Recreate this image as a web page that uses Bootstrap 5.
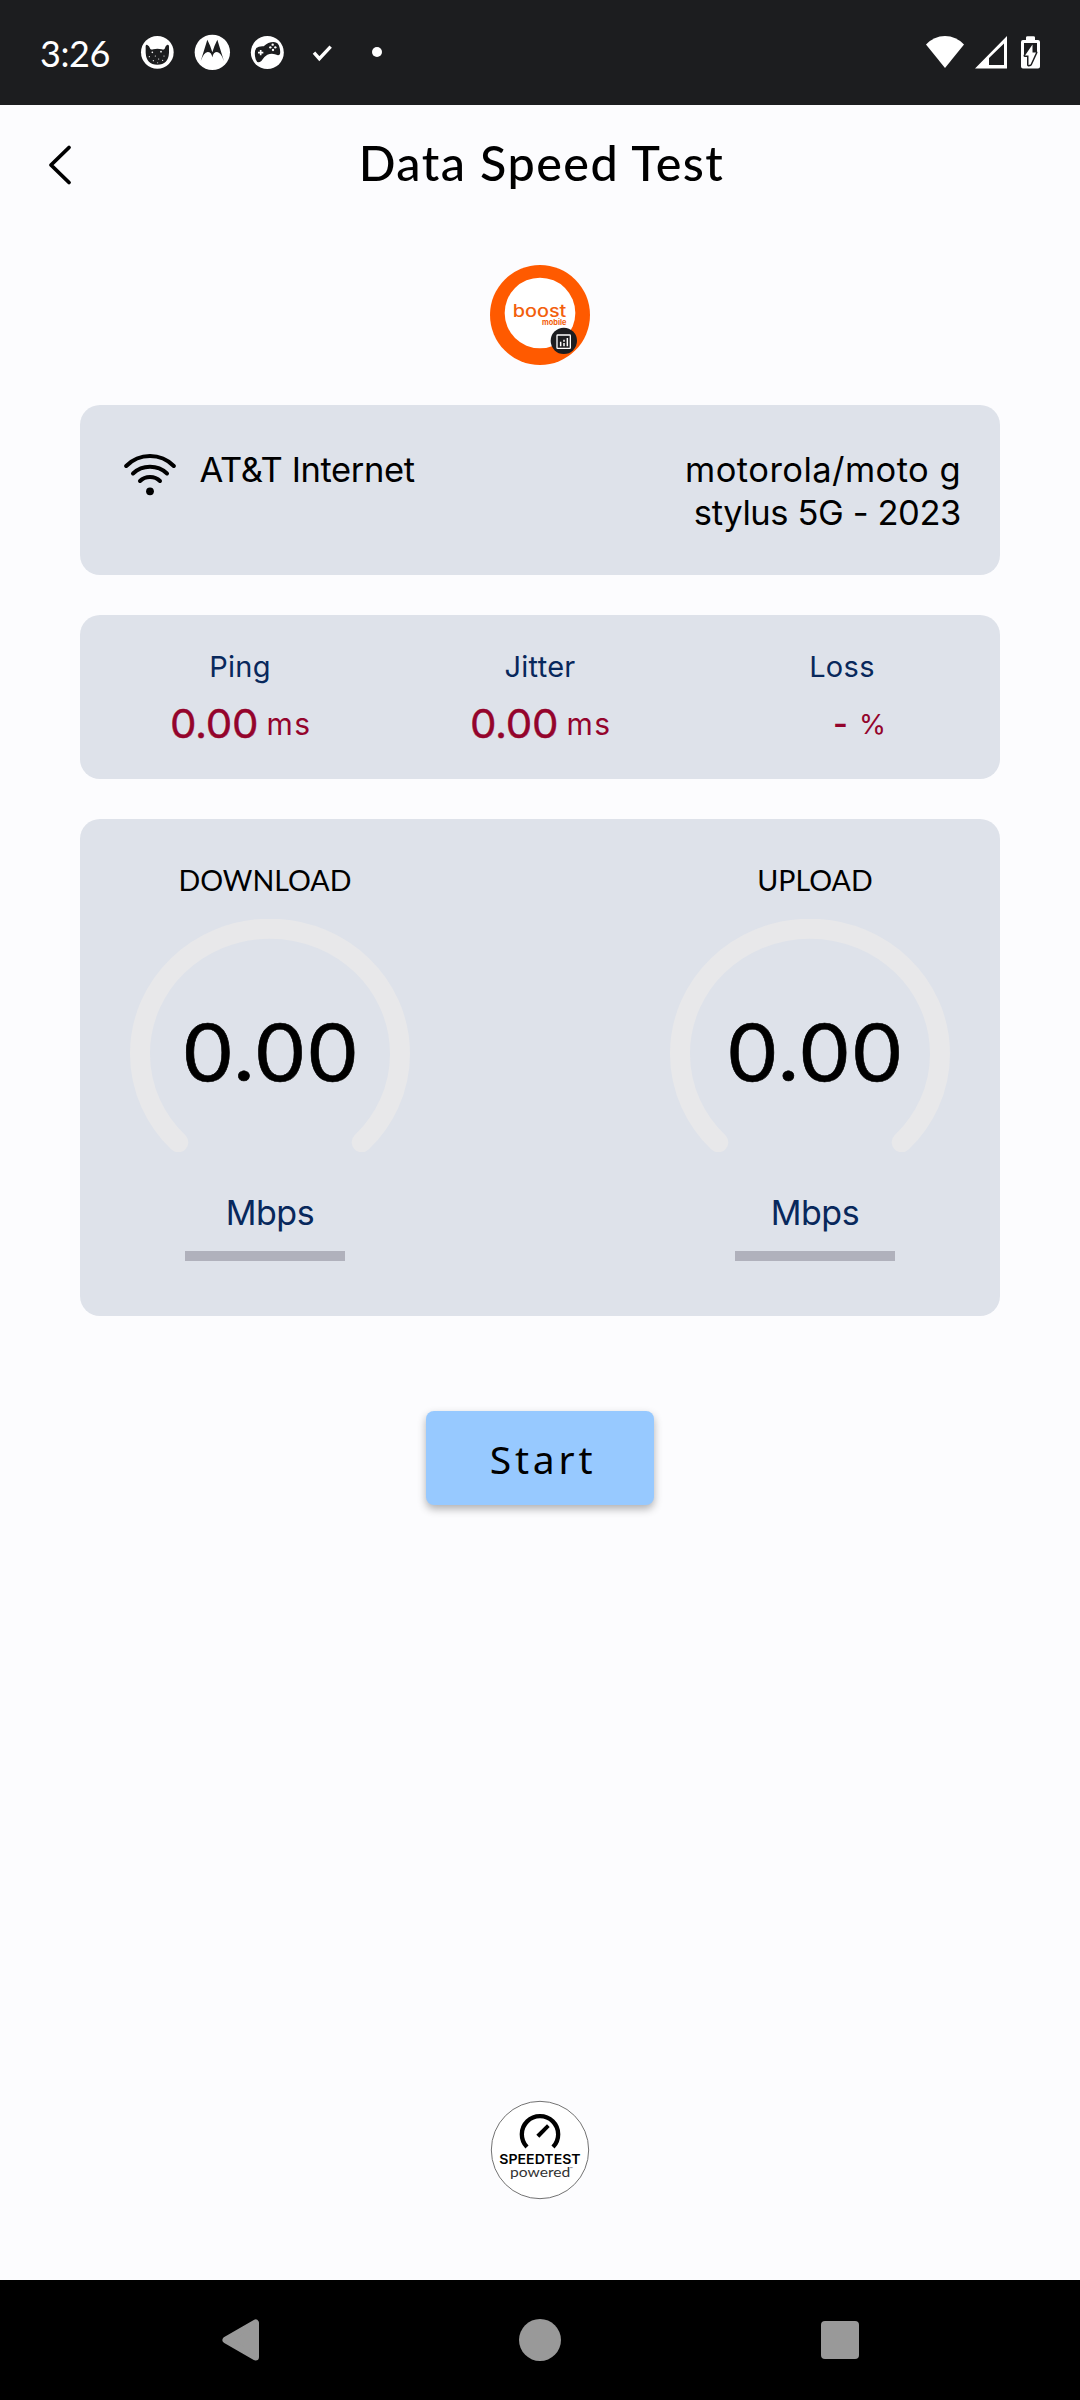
<!DOCTYPE html>
<html lang="en">
<head>
<meta charset="utf-8">
<meta name="viewport" content="width=device-width, initial-scale=1">
<title>Data Speed Test</title>
<link href="https://cdn.jsdelivr.net/npm/bootstrap@5.3.0/dist/css/bootstrap.min.css" rel="stylesheet">
<style>
body{background:#fcfcfe;color:#000;font-family:Inter,"Liberation Sans",sans-serif}
.screen{width:1080px;height:2400px;overflow:hidden}
svg{display:block;flex:none}
.status-bar{height:105px;background:#1c1d1f;padding:0 40px}
.clock{font:400 36px/36px Lato,sans-serif;width:90px;letter-spacing:-.4px;padding-top:1px}
.app-bar{height:113px}
.app-title{font:500 48.5px/60px Lato,sans-serif;letter-spacing:1.45px;margin-left:3px}
.back-btn{left:0;top:0;width:120px;height:120px}
.brand{margin-top:47px}
.panel{background:#dee2ea;border-radius:20px;margin:40px 80px 0}
.net-panel{height:170px;padding:43px 39px 0 44px;font-size:34.5px;line-height:43px}
.net-name{margin-left:23.5px;letter-spacing:-.4px}
.net-device{letter-spacing:.45px}
.net-device span{letter-spacing:-.4px}
.wifi-icon{margin-top:5px}
.stat-panel{height:164px;padding:32px 10px 0}
.navy{color:#08285c}
.crimson{color:#94042c}
.stat-name{font-size:29px;line-height:40px;letter-spacing:.3px}
.stat-val{margin-top:12px;line-height:50px;gap:11px;padding-left:3px}
.stat-num{font-size:40px;letter-spacing:-.3px;transform:scaleX(1.05);-webkit-text-stroke:.4px}
.stat-unit{font-size:30px;letter-spacing:1.4px}
.loss-val{padding-left:39px}
.loss-dash{font-size:32px;font-weight:600}
.loss-unit{font-size:27.5px}
.gauge-panel{height:497px;padding:43px 50px 0}
.gauge{width:280px}
.gauge-name{font:400 28.6px/36px Lato,sans-serif;margin-bottom:21px}
.gauge-num{top:94px;left:0;right:0;font-size:78px;line-height:80px;letter-spacing:-.5px;transform:scaleX(1.08);-webkit-text-stroke:.6px}
.gauge-unit{font-size:34px;line-height:42px;letter-spacing:-.4px;margin-top:40px}
.gauge-line{width:160px;height:10px;background:#b0b1bc;margin-top:17px}
.shift-l{margin-left:-10px}
.shift-r{margin-left:10px}
.gauge-up .gauge-num{left:9px}
.start-btn{width:228px;height:94px;margin-top:95px;padding:2px 0 0 6px;background:#97c9ff;border:0;border-radius:8px;font:400 39px/92px "Noto Sans",sans-serif;letter-spacing:3.8px;color:#000;box-shadow:0 4px 8px rgba(0,0,0,.3)}
.powered-logo{margin-bottom:80px}
.nav-keys{height:120px;background:#000;padding:0 221px}
</style>
</head>
<body>
<div class="screen d-flex flex-column">
  <header class="status-bar d-flex align-items-center">
    <span class="clock text-white">3:26</span>
    <!-- cat -->
    <svg width="55" height="55" viewBox="0 15 165 165"><circle cx="82" cy="97" r="49" fill="#fff"/><path d="M47 84Q46 73 51 74Q58 76 61 87Q65 90 70 88Q82 84 95 88Q101 90 104 86Q107 75 112 74Q118 73 117 84V98Q115 134 82 134Q49 134 47 98Z" fill="#1c1d1f"/><g fill="#fff"><circle cx="67" cy="97" r="2.500"/><circle cx="93" cy="95" r="2.500"/><circle cx="58" cy="110" r="1.800"/><circle cx="76" cy="108" r="1.800"/><circle cx="86" cy="117" r="1.800"/><circle cx="70" cy="122" r="1.800"/><circle cx="102" cy="108" r="1.800"/><circle cx="98" cy="121" r="1.800"/><circle cx="83" cy="128" r="1.500"/></g></svg>
    <!-- motorola -->
    <svg width="55" height="55" viewBox="0 15 165 165"><circle cx="82" cy="97" r="53" fill="#fff"/><path d="M47 124L67 59Q76 76 82 97Q88 76 97 59L117 124Q108 97 96 96Q85 96 82 112Q79 96 68 96Q56 97 47 124Z" fill="#1c1d1f"/></svg>
    <!-- game controller -->
    <svg width="55" height="55" viewBox="0 15 165 165"><circle cx="82" cy="97.500" r="49.500" fill="#fff"/><path d="M49 84Q56 78 71 79Q84 66 101 66Q116 66 119 84Q124 105 114 106Q98 98 82 104Q71 110 64 123Q52 133 47 118Q41 96 49 84Z" fill="#1c1d1f"/><path d="M62 90V106M54 98H70" stroke="#fff" stroke-width="5"/><g fill="#fff"><circle cx="98" cy="74" r="3.500"/><circle cx="91" cy="82" r="3.500"/><circle cx="106" cy="82" r="3.500"/><circle cx="99" cy="90" r="3.500"/></g></svg>
    <svg width="55" height="55" viewBox="0 15 165 165"><path d="M57 98L73 116L107 80" fill="none" stroke="#fff" stroke-width="10"/></svg>
    <svg width="55" height="55" viewBox="0 15 165 165"><circle cx="81" cy="96" r="15" fill="#fff"/></svg>
    <svg class="ms-auto" width="38" height="33" viewBox="926 36 38 33"><path d="M926 44.500Q934 36 945 36T964 44.500L945 68Z" fill="#fff"/></svg>
    <svg style="margin-left:11px" width="32" height="33" viewBox="975 36 32 33"><path fill-rule="evenodd" d="M975 68.500L1007 36V68.500ZM989 58V65H1004V43.500Z" fill="#fff"/></svg>
    <svg style="margin-left:14px" width="19" height="33" viewBox="1021 36 19 33"><path d="M1026 40V37.500Q1026 36.300 1027.500 36.300H1033.500Q1035 36.300 1035 37.500V40H1038Q1040 40 1040 42V66.500Q1040 68.500 1038 68.500H1023Q1021 68.500 1021 66.500V42Q1021 40 1023 40Z" fill="#fff"/><path d="M1024 43H1037V54H1024Z" fill="#1c1d1f"/><path d="M1032.500 44.500V52.500H1036L1030.500 64.500L1028.500 65V55.500H1025Z" fill="#fff" stroke="#1c1d1f" stroke-width="3" stroke-linejoin="round" paint-order="stroke"/></svg>
  </header>

  <div class="app-bar position-relative d-flex align-items-center justify-content-center">
    <a class="back-btn position-absolute" href="#" aria-label="Back"><svg width="120" height="120" viewBox="0 105 120 120"><path d="M69 147.500L51 165L69 182.500" fill="none" stroke="#000" stroke-width="3.800" stroke-linecap="round" stroke-linejoin="round"/></svg></a>
    <h1 class="app-title mb-0">Data Speed Test</h1>
  </div>

  <svg class="brand mx-auto" width="100" height="100" viewBox="90 45 300 300">
    <circle cx="240" cy="195" r="150" fill="#ff5a00"/><circle cx="240" cy="189" r="106" fill="#fff"/>
    <text x="158" y="200" font-family="Inter,sans-serif" font-size="50" font-weight="500" fill="#f3600d" textLength="161" lengthAdjust="spacingAndGlyphs">boost</text>
    <text x="246" y="225" font-family="Inter,sans-serif" font-size="23" font-weight="700" fill="#f3600d" textLength="73" lengthAdjust="spacingAndGlyphs">mobile</text>
    <circle cx="311.500" cy="272.500" r="39.500" fill="#1c1d20"/>
    <rect x="291" y="255" width="40" height="40" rx="2" fill="none" stroke="#fff" stroke-width="4"/>
    <path d="M302 275V289M312 269V275M312 279V289M322 264V289" stroke="#fff" stroke-width="4.500"/>
  </svg>

  <section class="panel net-panel d-flex align-items-start">
    <svg class="wifi-icon" width="52" height="44" viewBox="124 453 52 44"><g fill="none" stroke="#000" stroke-width="4" stroke-linecap="round"><path d="M126.200 466Q136 456 150 456T173.800 466"/><path d="M133 473.500Q140 466.800 150 466.800T167 473.500"/><path d="M140 481Q144 477 150 477T160 481"/></g><circle cx="150" cy="491.300" r="3.900"/></svg>
    <span class="net-name">AT&amp;T Internet</span>
    <span class="net-device ms-auto text-end">motorola/moto g<br><span>stylus 5G - 2023</span></span>
  </section>

  <section class="panel stat-panel">
    <div class="row g-0 text-center">
      <div class="col-4"><div class="stat-name navy">Ping</div><div class="stat-val crimson d-flex justify-content-center"><span class="stat-num">0.00</span><span class="stat-unit">ms</span></div></div>
      <div class="col-4"><div class="stat-name navy">Jitter</div><div class="stat-val crimson d-flex justify-content-center"><span class="stat-num">0.00</span><span class="stat-unit">ms</span></div></div>
      <div class="col-4"><div class="stat-name navy ps-1">Loss</div><div class="stat-val loss-val crimson d-flex justify-content-center"><span class="loss-dash">-</span><span class="loss-unit">%</span></div></div>
    </div>
  </section>

  <section class="panel gauge-panel d-flex justify-content-between">
    <div class="gauge">
      <div class="gauge-name text-center shift-l">DOWNLOAD</div>
      <div class="position-relative">
        <svg width="280" height="233" viewBox="0 0 280 233"><path d="M48.300 223.300A130 125 0 1 1 231.700 223.300" fill="none" stroke="#e8e8ea" stroke-width="20" stroke-linecap="round"/></svg>
        <div class="gauge-num position-absolute text-center">0.00</div>
      </div>
      <div class="gauge-unit navy text-center">Mbps</div>
      <div class="d-flex justify-content-center shift-l"><div class="gauge-line"></div></div>
    </div>
    <div class="gauge gauge-up">
      <div class="gauge-name text-center shift-r">UPLOAD</div>
      <div class="position-relative">
        <svg width="280" height="233" viewBox="0 0 280 233"><path d="M48.300 223.300A130 125 0 1 1 231.700 223.300" fill="none" stroke="#e8e8ea" stroke-width="20" stroke-linecap="round"/></svg>
        <div class="gauge-num position-absolute text-center">0.00</div>
      </div>
      <div class="gauge-unit navy text-center shift-r">Mbps</div>
      <div class="d-flex justify-content-center shift-r"><div class="gauge-line"></div></div>
    </div>
  </section>

  <button type="button" class="start-btn mx-auto flex-shrink-0">Start</button>

  <svg class="powered-logo mt-auto mx-auto" width="100" height="100" viewBox="60 59 300 300">
    <circle cx="210" cy="209" r="146" fill="#fff" stroke="#555" stroke-width="2.500"/>
    <path d="M171 200A54.500 54.500 0 1 1 249 200" fill="none" stroke="#000" stroke-width="13"/>
    <path d="M199 163L231 132L239 140L208 172Z"/>
    <text x="88" y="251" font-family="Inter,sans-serif" font-size="38" font-weight="600" textLength="244" lengthAdjust="spacingAndGlyphs">SPEEDTEST</text>
    <text x="120" y="290" font-family="Lato,sans-serif" font-size="41" fill="#333" textLength="181" lengthAdjust="spacingAndGlyphs">powered</text>
    <text x="299" y="268" font-family="Lato,sans-serif" font-size="12" fill="#333">™</text>
  </svg>

  <nav class="nav-keys d-flex align-items-center justify-content-between flex-shrink-0">
    <svg width="38" height="42" viewBox="0 0 38 42"><path d="M5 21L34.500 4V38Z" fill="#999" stroke="#999" stroke-width="7" stroke-linejoin="round"/></svg>
    <svg width="42" height="42" viewBox="0 0 42 42"><circle cx="21" cy="21" r="21" fill="#999"/></svg>
    <svg width="38" height="38" viewBox="0 0 38 38"><rect width="38" height="38" rx="4" fill="#999"/></svg>
  </nav>
</div>
<script src="https://cdn.jsdelivr.net/npm/bootstrap@5.3.0/dist/js/bootstrap.bundle.min.js"></script>
</body>
</html>
